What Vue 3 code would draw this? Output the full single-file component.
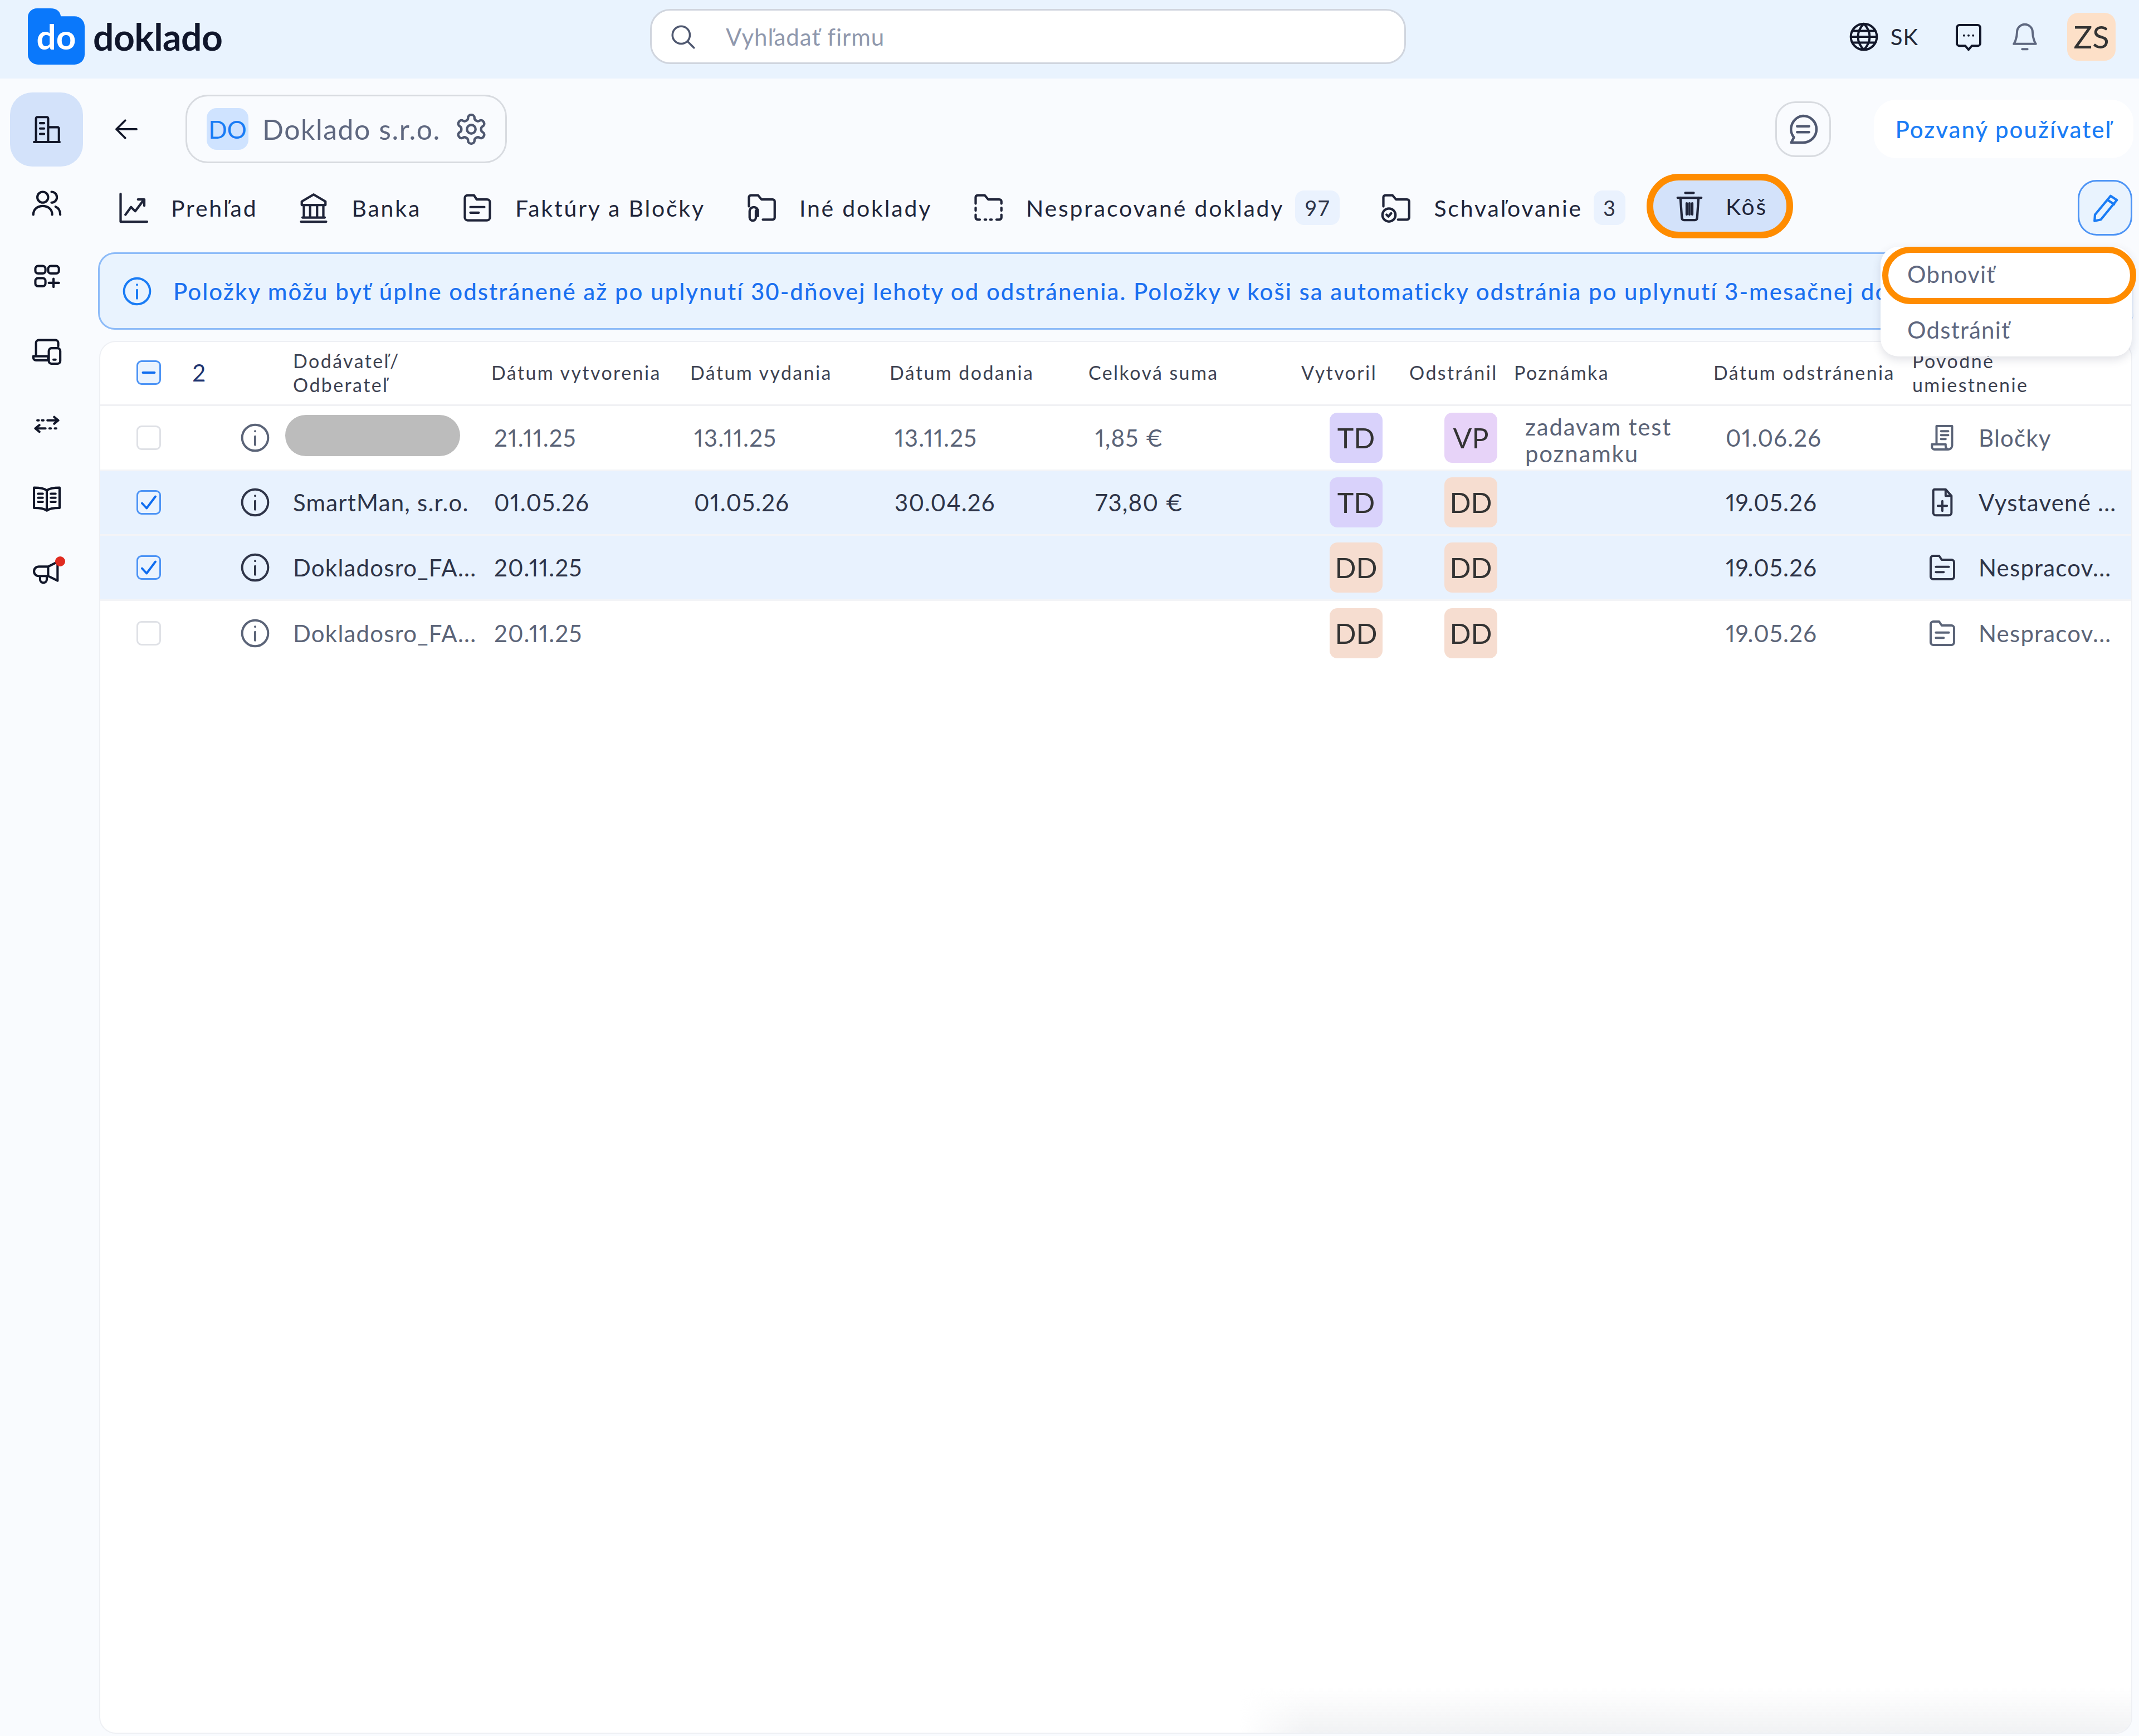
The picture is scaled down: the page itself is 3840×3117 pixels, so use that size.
<script setup>
const icons = {
  building: 'M2.5 21.5h19M4 21.5V4a1 1 0 0 1 1-1h7a1 1 0 0 1 1 1v17.5M13 10.5h7a1 1 0 0 1 1 1v10M7 7.5h3M7 11.5h3M7 15.5h3',
  users: 'M9 3.5a4 4 0 1 1 0 8 4 4 0 0 1 0-8zM2 20.5c0-4.2 3.2-6.5 7-6.5s7 2.3 7 6.5M15.5 3.5a4 4 0 0 1 0 8M18.5 14.5c2.2.9 3.5 3 3.5 6',
  apps: 'M5.5 4H9a2 2 0 0 1 2 2v1.5a2 2 0 0 1-2 2H5.5a2 2 0 0 1-2-2V6a2 2 0 0 1 2-2zM15 4h4a2 2 0 0 1 2 2v1.5a2 2 0 0 1-2 2h-4a2 2 0 0 1-2-2V6a2 2 0 0 1 2-2zM5.5 13H9a2 2 0 0 1 2 2v2a2 2 0 0 1-2 2H5.5a2 2 0 0 1-2-2v-2a2 2 0 0 1 2-2zM17 13.5v6M13.5 16.5H21',
  devices: 'M4 15V6a2 2 0 0 1 2-2h12.5a2 2 0 0 1 2 2v2.5M2 16h11v3H4a2 2 0 0 1-2-2zM15.5 10H20a2 2 0 0 1 2 2v7.5a2 2 0 0 1-2 2h-4.5a2 2 0 0 1-2-2V12a2 2 0 0 1 2-2zM17 18.5h1.5',
  transfer: 'M5 9h1M8.5 9h1M12.5 9h8M17.5 6.5l3 2.5-3 2.5M19 15h-1M15 15h-1M11 15H3.5M6.5 12.5l-3 2.5 3 2.5',
  book: 'M12 6c-2-1.5-5-2-9.5-2v15c4.5 0 7.5.5 9.5 2 2-1.5 5-2 9.5-2V4C17 4 14 4.5 12 6zM12 6v15M5.5 8.5H9M5.5 11.5H9M5.5 14.5H9M15 8.5h3.5M15 11.5h3.5M15 14.5h3.5',
  megaphone: 'M2.5 11.5C2.5 9.5 4 8 6 8h7l7-3.5v14L13 15H6c-2 0-3.5-1.5-3.5-3.5zM13 8v7M7 15v2.5a2.5 2.5 0 0 0 5 0V15',
  back: 'M20 12H4M11 5l-7 7 7 7',
  gear: 'M12.22 2h-.44a2 2 0 0 0-2 2v.18a2 2 0 0 1-1 1.73l-.43.25a2 2 0 0 1-2 0l-.15-.08a2 2 0 0 0-2.73.73l-.22.38a2 2 0 0 0 .73 2.73l.15.1a2 2 0 0 1 1 1.72v.51a2 2 0 0 1-1 1.74l-.15.09a2 2 0 0 0-.73 2.73l.22.38a2 2 0 0 0 2.73.73l.15-.08a2 2 0 0 1 2 0l.43.25a2 2 0 0 1 1 1.73V20a2 2 0 0 0 2 2h.44a2 2 0 0 0 2-2v-.18a2 2 0 0 1 1-1.73l.43-.25a2 2 0 0 1 2 0l.15.08a2 2 0 0 0 2.73-.73l.22-.39a2 2 0 0 0-.73-2.73l-.15-.08a2 2 0 0 1-1-1.74v-.5a2 2 0 0 1 1-1.74l.15-.09a2 2 0 0 0 .73-2.73l-.22-.38a2 2 0 0 0-2.73-.73l-.15.08a2 2 0 0 1-2 0l-.43-.25a2 2 0 0 1-1-1.73V4a2 2 0 0 0-2-2zM12 9a3 3 0 1 0 0 6 3 3 0 0 0 0-6z',
  chart: 'M3 2v20h19M6.5 17l4-5.5 3 3 6-8M15.5 6H20v4.5',
  bank: 'M12 2.5l8.5 5V10h-17V7.5zM5 19V10M9.5 19V10M14.5 19V10M19 19V10M4 19h16M3 22h18',
  folderDoc: 'M3 5a2 2 0 0 1 2-2h4.5l2 3H19a2 2 0 0 1 2 2v11a2 2 0 0 1-2 2H5a2 2 0 0 1-2-2zM7 11.5h10M7 15.5h6',
  folderClip: 'M3 11V4.5A1.5 1.5 0 0 1 4.5 3h5L12 6h8a1.5 1.5 0 0 1 1.5 1.5V19a1.5 1.5 0 0 1-1.5 1.5h-7M8 14v5a2.2 2.2 0 0 1-4.5 0v-4.5a3 3 0 0 1 6 0V18',
  folderDash: 'M3 9V4.5A1.5 1.5 0 0 1 4.5 3h5L12 6h8a1.5 1.5 0 0 1 1.5 1.5V9M3 12v2M3 17v2a1.5 1.5 0 0 0 1.5 1.5H6M9.5 20.5h1M13.5 20.5h1M18 20.5h2a1.5 1.5 0 0 0 1.5-1.5v-2M21.5 12v2',
  folderCheck: 'M3 11V4.5A1.5 1.5 0 0 1 4.5 3h5L12 6h8a1.5 1.5 0 0 1 1.5 1.5V19a1.5 1.5 0 0 1-1.5 1.5h-6.5M7 12.5a4.7 4.7 0 1 1 0 9.4 4.7 4.7 0 0 1 0-9.4zM5.3 17l1.3 1.3 2-2.3',
  trash: 'M3.5 6h17M9 2.5h6M5.5 6l1 14.5A1.5 1.5 0 0 0 8 22h8a1.5 1.5 0 0 0 1.5-1.5l1-14.5M10 10v8M12 10v8M14 10v8',
  pencil: 'M16 3.5l4.5 3L9 20.5l-4.5 1 .3-4.5zM14 6.5l4.5 3',
  globe: 'M12 2a10 10 0 1 0 0 20 10 10 0 0 0 0-20zM2 12h20M3 7.5h18M3 16.5h18M12 2c-6 6-6 14 0 20M12 2c6 6 6 14 0 20',
  chat: 'M5 3h14a2 2 0 0 1 2 2v12a2 2 0 0 1-2 2h-4.5L12 22l-2.5-3H5a2 2 0 0 1-2-2V5a2 2 0 0 1 2-2zM8.5 11h.01M12 11h.01M15.5 11h.01',
  bell: 'M12 2.5a6 6 0 0 0-6 6c0 5.5-2.5 9-2.5 9h17S18 14 18 8.5a6 6 0 0 0-6-6zM10 21.5h4',
  message: 'M12 3a9 9 0 0 1 0 18H4l1.8-3.5A9 9 0 0 1 12 3zM8 10h8M8 14h8',
  search: 'M10.5 3a7.5 7.5 0 1 0 0 15 7.5 7.5 0 0 0 0-15zM16 16l5.5 5.5',
  info: 'M12 2a10 10 0 1 0 0 20 10 10 0 0 0 0-20zM12 11v6.5M12 7h.01',
  receipt: 'M7.5 3h12v15a3 3 0 0 1-3 3H6M7.5 3v14M4 17h10.5v1a3 3 0 0 0 2 3H6a2 2 0 0 1-2-2zM11 7h5.5M11 10h5.5M11 13h3.5',
  docPlus: 'M6 2h8.5L19 7v13a2 2 0 0 1-2 2H7a2 2 0 0 1-2-2V3a1 1 0 0 1 1-1zM14.5 2v5H19M12 11v7.5M8.5 14.7h7',
}

const sideItems = ['building', 'users', 'apps', 'devices', 'transfer', 'book', 'megaphone']

const tabs = [
  { label: 'Prehľad', icon: 'chart' },
  { label: 'Banka', icon: 'bank' },
  { label: 'Faktúry a Bločky', icon: 'folderDoc' },
  { label: 'Iné doklady', icon: 'folderClip' },
  { label: 'Nespracované doklady', icon: 'folderDash', badge: '97' },
  { label: 'Schvaľovanie', icon: 'folderCheck', badge: '3' },
]

const columns = [
  { label: 'Dodávateľ/ Odberateľ', cls: 'col-name' },
  { label: 'Dátum vytvorenia' },
  { label: 'Dátum vydania' },
  { label: 'Dátum dodania' },
  { label: 'Celková suma' },
  { label: 'Vytvoril' },
  { label: 'Odstránil' },
  { label: 'Poznámka' },
  { label: 'Dátum odstránenia' },
  { label: 'Povodné umiestnenie', cls: 'col-place' },
]

const rows = [
  { checked: false, name: '', created: '21.11.25', issued: '13.11.25', delivered: '13.11.25', sum: '1,85 €', by: 'TD', removedBy: 'VP', note: 'zadavam test poznamku', removed: '01.06.26', icon: 'receipt', place: 'Bločky' },
  { checked: true, name: 'SmartMan, s.r.o.', created: '01.05.26', issued: '01.05.26', delivered: '30.04.26', sum: '73,80 €', by: 'TD', removedBy: 'DD', note: '', removed: '19.05.26', icon: 'docPlus', place: 'Vystavené ...' },
  { checked: true, name: 'Dokladosro_FA...', created: '20.11.25', issued: '', delivered: '', sum: '', by: 'DD', removedBy: 'DD', note: '', removed: '19.05.26', icon: 'folderDoc', place: 'Nespracov...' },
  { checked: false, name: 'Dokladosro_FA...', created: '20.11.25', issued: '', delivered: '', sum: '', by: 'DD', removedBy: 'DD', note: '', removed: '19.05.26', icon: 'folderDoc', place: 'Nespracov...' },
]
</script>

<template>
  <div class="page">
    <header class="topbar">
      <div class="logo">
        <div class="logo-mark">
          <svg class="logo-shape" viewBox="0 0 100 100" preserveAspectRatio="none">
            <path d="M16 0h24c11 0 17 6 18 14h24c10 0 18 8 18 18v50c0 10-8 18-18 18H18C8 100 0 92 0 82V16C0 7 7 0 16 0z" fill="#0a78fb" />
          </svg>
          <span class="logo-do">do</span>
        </div>
        <span class="logo-name">doklado</span>
      </div>
      <div class="search">
        <svg class="icon search-icon" viewBox="0 0 24 24"><path :d="icons.search" /></svg>
        <span class="search-text">Vyhľadať firmu</span>
      </div>
      <div class="top-right">
        <svg class="icon top-icon" viewBox="0 0 24 24"><path :d="icons.globe" /></svg>
        <span class="lang">SK</span>
        <svg class="icon top-icon chat" viewBox="0 0 24 24"><path :d="icons.chat" /></svg>
        <svg class="icon top-icon bell" viewBox="0 0 24 24"><path :d="icons.bell" /></svg>
        <div class="user-badge">ZS</div>
      </div>
    </header>

    <div class="body">
      <aside class="sidebar">
        <div v-for="(item, i) in sideItems" :key="item" class="side-item" :class="{ active: i === 0 }">
          <svg class="icon side-icon" viewBox="0 0 24 24"><path :d="icons[item]" /></svg>
          <span v-if="item === 'megaphone'" class="red-dot"></span>
        </div>
      </aside>

      <main class="main">
        <div class="company-row">
          <svg class="icon back-icon" viewBox="0 0 24 24"><path :d="icons.back" /></svg>
          <div class="company-chip">
            <span class="company-avatar">DO</span>
            <span class="company-name">Doklado s.r.o.</span>
            <svg class="icon gear-icon" viewBox="0 0 24 24"><path :d="icons.gear" /></svg>
          </div>
          <button type="button" class="msg-button">
            <svg class="icon msg-icon" viewBox="0 0 24 24"><path :d="icons.message" /></svg>
          </button>
          <div class="invited">Pozvaný používateľ</div>
        </div>

        <nav class="tabs">
          <div v-for="tab in tabs" :key="tab.label" class="tab">
            <svg class="icon tab-icon" viewBox="0 0 24 24"><path :d="icons[tab.icon]" /></svg>
            <span class="tab-label">{{ tab.label }}</span>
            <span v-if="tab.badge" class="tab-badge">{{ tab.badge }}</span>
          </div>
          <div class="tab tab-trash">
            <svg class="icon tab-icon" viewBox="0 0 24 24"><path :d="icons.trash" /></svg>
            <span class="tab-label">Kôš</span>
          </div>
          <div class="edit-wrap">
            <button type="button" class="edit-button">
              <svg class="icon edit-icon" viewBox="0 0 24 24"><path :d="icons.pencil" /></svg>
            </button>
            <div class="menu">
              <div class="menu-item marked">Obnoviť</div>
              <div class="menu-item">Odstrániť</div>
            </div>
          </div>
        </nav>

        <div class="notice">
          <svg class="icon notice-icon" viewBox="0 0 24 24"><path :d="icons.info" /></svg>
          <span class="notice-text">Položky môžu byť úplne odstránené až po uplynutí 30-dňovej lehoty od odstránenia. Položky v koši sa automaticky odstránia po uplynutí 3-mesačnej doby.</span>
        </div>

        <section class="table-card">
          <div class="grid-row head-row">
            <div class="select-cell">
              <span class="box indeterminate">
                <svg viewBox="0 0 24 24" class="box-mark"><path d="M5 12h14" /></svg>
              </span>
              <span class="count">2</span>
            </div>
            <div></div>
            <div v-for="col in columns" :key="col.label" class="head-cell" :class="col.cls">{{ col.label }}</div>
          </div>

          <div v-for="(row, i) in rows" :key="i" class="grid-row body-row" :class="{ selected: row.checked }">
            <div class="select-cell">
              <span class="box" :class="{ checked: row.checked }">
                <svg v-if="row.checked" viewBox="0 0 24 24" class="box-mark"><path d="M4 13l5.5 6L20 5" /></svg>
              </span>
            </div>
            <div class="info-cell">
              <svg class="icon info-icon" viewBox="0 0 24 24"><path :d="icons.info" /></svg>
            </div>
            <div class="cell name-cell">
              <span v-if="row.name">{{ row.name }}</span>
              <span v-else class="redacted"></span>
            </div>
            <div class="cell date pad-5">{{ row.created }}</div>
            <div class="cell date pad-7">{{ row.issued }}</div>
            <div class="cell date pad-9">{{ row.delivered }}</div>
            <div class="cell date pad-12">{{ row.sum }}</div>
            <div class="cell by-cell"><span class="initials" :class="'tone-' + row.by">{{ row.by }}</span></div>
            <div class="cell removed-by-cell"><span class="initials" :class="'tone-' + row.removedBy">{{ row.removedBy }}</span></div>
            <div class="cell note-cell">{{ row.note }}</div>
            <div class="cell date pad-22">{{ row.removed }}</div>
            <div class="cell place-cell">
              <svg class="icon place-icon" viewBox="0 0 24 24"><path :d="icons[row.icon]" /></svg>
              <span>{{ row.place }}</span>
            </div>
          </div>

          <div class="bottom-fade"></div>
        </section>
      </main>
    </div>
  </div>
</template>

<style>
html,
body {
  margin: 0;
  background: #f9fbfe;
}
</style>

<style scoped>
.page {
  width: 3840px;
  height: 3117px;
  overflow: hidden;
  display: flex;
  flex-direction: column;
  background: #f9fbfe;
  font-family: Lato, 'Noto Sans', sans-serif;
  color: #2e3448;
}

.icon {
  display: block;
  flex: none;
  fill: none;
  stroke: currentColor;
  stroke-width: 1.7;
  stroke-linecap: round;
  stroke-linejoin: round;
}

/* top bar */
.topbar {
  flex: none;
  height: 141px;
  box-sizing: border-box;
  display: flex;
  align-items: center;
  padding: 0 42px 10px 50px;
  background: #e9f3fe;
}

.logo {
  width: 1117px;
  display: flex;
  align-items: center;
  gap: 15px;
}

.logo-mark {
  position: relative;
  width: 102px;
  height: 101px;
  display: flex;
  align-items: center;
  justify-content: center;
}

.logo-shape {
  position: absolute;
  inset: 0;
  width: 100%;
  height: 100%;
}

.logo-do {
  position: relative;
  margin-bottom: 2px;
  font-size: 62px;
  line-height: 1;
  font-weight: 700;
  color: #fff;
}

.logo-name {
  font-size: 66px;
  font-weight: 700;
  letter-spacing: -0.5px;
  color: #10162b;
}

.search {
  width: 1357px;
  height: 99px;
  box-sizing: border-box;
  display: flex;
  align-items: center;
  gap: 52px;
  padding-left: 31px;
  border: 3px solid #d0d5de;
  border-radius: 36px;
  background: #fff;
}

.search-icon {
  width: 50px;
  height: 50px;
  color: #4f5870;
}

.search-text {
  font-size: 42px;
  letter-spacing: 1px;
  color: #8f98ad;
}

.top-right {
  margin-left: auto;
  display: flex;
  align-items: center;
}

.top-icon {
  width: 56px;
  height: 56px;
  color: #12172a;
}

.lang {
  margin-left: 20px;
  font-size: 40px;
  letter-spacing: 1px;
  color: #222737;
}

.chat {
  margin-left: 62px;
}

.bell {
  margin-left: 45px;
  color: #5f6880;
}

.user-badge {
  margin-left: 48px;
  width: 87px;
  height: 86px;
  display: flex;
  align-items: center;
  justify-content: center;
  border-radius: 20px;
  background: #fde0c8;
  font-size: 56px;
  color: #333;
}

.body {
  flex: 1;
  min-height: 0;
  display: flex;
}

/* sidebar */
.sidebar {
  flex: none;
  width: 176px;
  padding: 25px 0 0 18px;
  box-sizing: border-box;
}

.side-item {
  position: relative;
  width: 131px;
  height: 132.5px;
  display: flex;
  align-items: center;
  justify-content: center;
  border-radius: 40px;
  color: #12172a;
}

.side-item.active {
  background: #d3e2fa;
}

.side-icon {
  width: 58px;
  height: 58px;
}

.red-dot {
  position: absolute;
  top: 38px;
  right: 32px;
  width: 18px;
  height: 18px;
  border-radius: 50%;
  background: #e02b20;
}

/* main column */
.main {
  flex: 1;
  min-width: 0;
  display: flex;
  flex-direction: column;
}

.company-row {
  flex: none;
  height: 123px;
  margin-top: 29px;
  display: flex;
  align-items: center;
  padding: 0 10px 0 24px;
}

.back-icon {
  width: 54px;
  height: 54px;
  color: #12172a;
}

.company-chip {
  width: 577px;
  height: 123px;
  box-sizing: border-box;
  margin-left: 79px;
  display: flex;
  align-items: center;
  padding-left: 35px;
  border: 3px solid #d8dbe0;
  border-radius: 40px;
}

.company-avatar {
  width: 75px;
  height: 75px;
  display: flex;
  align-items: center;
  justify-content: center;
  border-radius: 18px;
  background: #cfe3ff;
  font-size: 44px;
  color: #1a7cf5;
}

.company-name {
  margin-left: 25px;
  font-size: 50px;
  letter-spacing: 1.5px;
  color: #5f6880;
}

.gear-icon {
  margin-left: auto;
  margin-right: 30px;
  width: 62px;
  height: 62px;
  color: #4f5870;
}

.msg-button {
  width: 100px;
  height: 100px;
  margin-left: auto;
  padding: 0;
  display: flex;
  align-items: center;
  justify-content: center;
  border: 3px solid #d8dbe0;
  border-radius: 36px;
  background: transparent;
}

.msg-icon {
  width: 64px;
  height: 64px;
  color: #4f5870;
}

.invited {
  margin-left: 77px;
  width: 466px;
  height: 105px;
  display: flex;
  align-items: center;
  justify-content: center;
  border-radius: 40px;
  background: #fff;
  font-size: 42px;
  font-weight: 500;
  letter-spacing: 2px;
  color: #1a7cf5;
}

/* tabs */
.tabs {
  flex: none;
  height: 122px;
  margin-top: 19px;
  padding: 0 12px 0 33px;
  display: flex;
  align-items: center;
}

.tab {
  display: flex;
  align-items: center;
  margin-right: 71px;
  color: #20253a;
}

.tab-icon {
  width: 60px;
  height: 60px;
}

.tab-label {
  margin-left: 38px;
  font-size: 41px;
  letter-spacing: 2.8px;
  white-space: nowrap;
}

.tab-badge {
  margin-left: 20px;
  height: 62px;
  min-width: 57px;
  padding: 0 17px;
  box-sizing: border-box;
  display: flex;
  align-items: center;
  justify-content: center;
  border-radius: 16px;
  background: #eaf2fe;
  font-size: 38px;
  letter-spacing: 1px;
  color: #2e3448;
}

.tab-trash {
  align-self: flex-start;
  height: 116px;
  box-sizing: border-box;
  margin: 0 0 0 -33px;
  padding: 0 34px 0 35px;
  border: 12px solid #ff8c00;
  border-radius: 58px;
  background: #d3e2fa;
}

.tab-trash .tab-label {
  margin-left: 35px;
}

.edit-wrap {
  position: relative;
  margin-left: auto;
}

.edit-button {
  width: 98px;
  height: 100px;
  padding: 0;
  display: flex;
  align-items: center;
  justify-content: center;
  border: 3px solid #4d94f5;
  border-radius: 34px;
  background: #e9f3fe;
}

.edit-icon {
  width: 60px;
  height: 60px;
  color: #1a7cf5;
}

.menu {
  position: absolute;
  z-index: 5;
  top: 120px;
  right: 1px;
  width: 451px;
  height: 197px;
  border-radius: 32px;
  background: #fff;
  box-shadow: 0 6px 16px rgba(60, 70, 100, 0.16);
}

.menu-item {
  height: 100px;
  box-sizing: border-box;
  display: flex;
  align-items: center;
  padding: 0 0 8px 48px;
  font-size: 42px;
  letter-spacing: 1.2px;
  color: #5f6880;
}

.menu-item.marked {
  height: 103px;
  width: 456px;
  margin-left: 3px;
  padding: 0 0 6px 34px;
  border: 11px solid #ff8c00;
  border-radius: 52px;
}

/* notice */
.notice {
  flex: none;
  height: 139px;
  box-sizing: border-box;
  margin: 19px 10px 0 0;
  display: flex;
  align-items: center;
  padding-left: 39px;
  overflow: hidden;
  border: 3px solid #8dbbf8;
  border-right: none;
  border-radius: 30px;
  background: #e9f3fe;
}

.notice-icon {
  width: 56px;
  height: 56px;
  color: #1a7cf5;
}

.notice-text {
  margin-left: 37px;
  font-size: 42px;
  font-weight: 500;
  letter-spacing: 2px;
  white-space: nowrap;
  color: #1a6ff0;
}

/* table */
.table-card {
  position: relative;
  flex: none;
  width: 3650px;
  height: 2501px;
  box-sizing: border-box;
  margin: 20px 0 0 2px;
  overflow: hidden;
  border: 2px solid #eef0f4;
  border-radius: 30px;
  background: #fff;
}

.grid-row {
  box-sizing: border-box;
  display: grid;
  grid-template-columns: 240px 92px 370px 357px 358px 357px 382px 194px 188px 358px 357px 1fr;
  align-items: center;
}

.head-row {
  height: 115px;
  padding-bottom: 3px;
  border-bottom: 3px solid #f0f1f4;
}

.select-cell {
  display: flex;
  align-items: center;
  gap: 56px;
  padding-left: 65px;
}

.box {
  flex: none;
  width: 44px;
  height: 44px;
  box-sizing: border-box;
  display: flex;
  align-items: center;
  justify-content: center;
  border: 3px solid #dfe1e6;
  border-radius: 9px;
  background: #fff;
}

.box.checked,
.box.indeterminate {
  border-color: #4d94f5;
  background: #eaf3fe;
}

.box-mark {
  width: 36px;
  height: 36px;
  fill: none;
  stroke: #0f6df0;
  stroke-width: 2.6;
  stroke-linecap: round;
  stroke-linejoin: round;
}

.count {
  font-size: 42px;
  color: #1f3570;
}

.head-cell {
  font-size: 34px;
  line-height: 43px;
  letter-spacing: 2.4px;
  color: #3d4252;
}

.col-name {
  padding-left: 14px;
  width: 260px;
}

.col-place {
  width: 300px;
}

.body-row {
  height: 116.5px;
  border-bottom: 3px solid #f3f4f7;
  color: #5b6478;
}

.body-row:nth-last-child(2) {
  border-bottom: none;
}

.body-row.selected {
  background: #e8f2fe;
  color: #2e3448;
}

.cell {
  font-size: 42px;
  letter-spacing: 1.2px;
  white-space: nowrap;
}

.date {
  font-variant-numeric: proportional-nums;
}

.info-cell {
  padding-left: 10px;
}

.info-icon {
  width: 56px;
  height: 56px;
}

.name-cell {
  padding-left: 14px;
}

.redacted {
  display: block;
  width: 314px;
  height: 74px;
  margin: -8px 0 0 -14px;
  border-radius: 37px;
  background: #bcbcbc;
}

.pad-5 {
  padding-left: 5px;
}

.pad-7 {
  padding-left: 7px;
}

.pad-9 {
  padding-left: 9px;
}

.pad-12 {
  padding-left: 12px;
}

.pad-22 {
  padding-left: 22px;
}

.by-cell {
  padding-left: 51px;
}

.removed-by-cell {
  padding-left: 63px;
}

.initials {
  width: 95px;
  height: 90px;
  display: flex;
  align-items: center;
  justify-content: center;
  border-radius: 14px;
  font-size: 50px;
  letter-spacing: 0;
  color: #333;
}

.tone-TD {
  background: #d9d2fb;
}

.tone-VP {
  background: #e7d3f8;
}

.tone-DD {
  background: #f6ddd0;
}

.note-cell {
  padding: 8px 0 0 20px;
  width: 300px;
  white-space: normal;
  line-height: 48px;
  letter-spacing: 1.8px;
}

.place-cell {
  display: flex;
  align-items: center;
  padding-left: 26px;
  gap: 37px;
}

.place-icon {
  width: 56px;
  height: 56px;
}

.bottom-fade {
  position: absolute;
  right: 0;
  bottom: 0;
  width: 1600px;
  height: 80px;
  background: linear-gradient(to bottom, rgba(241, 242, 244, 0), #f1f2f4);
  -webkit-mask-image: linear-gradient(to right, transparent, #000 120px);
  mask-image: linear-gradient(to right, transparent, #000 120px);
}
</style>
